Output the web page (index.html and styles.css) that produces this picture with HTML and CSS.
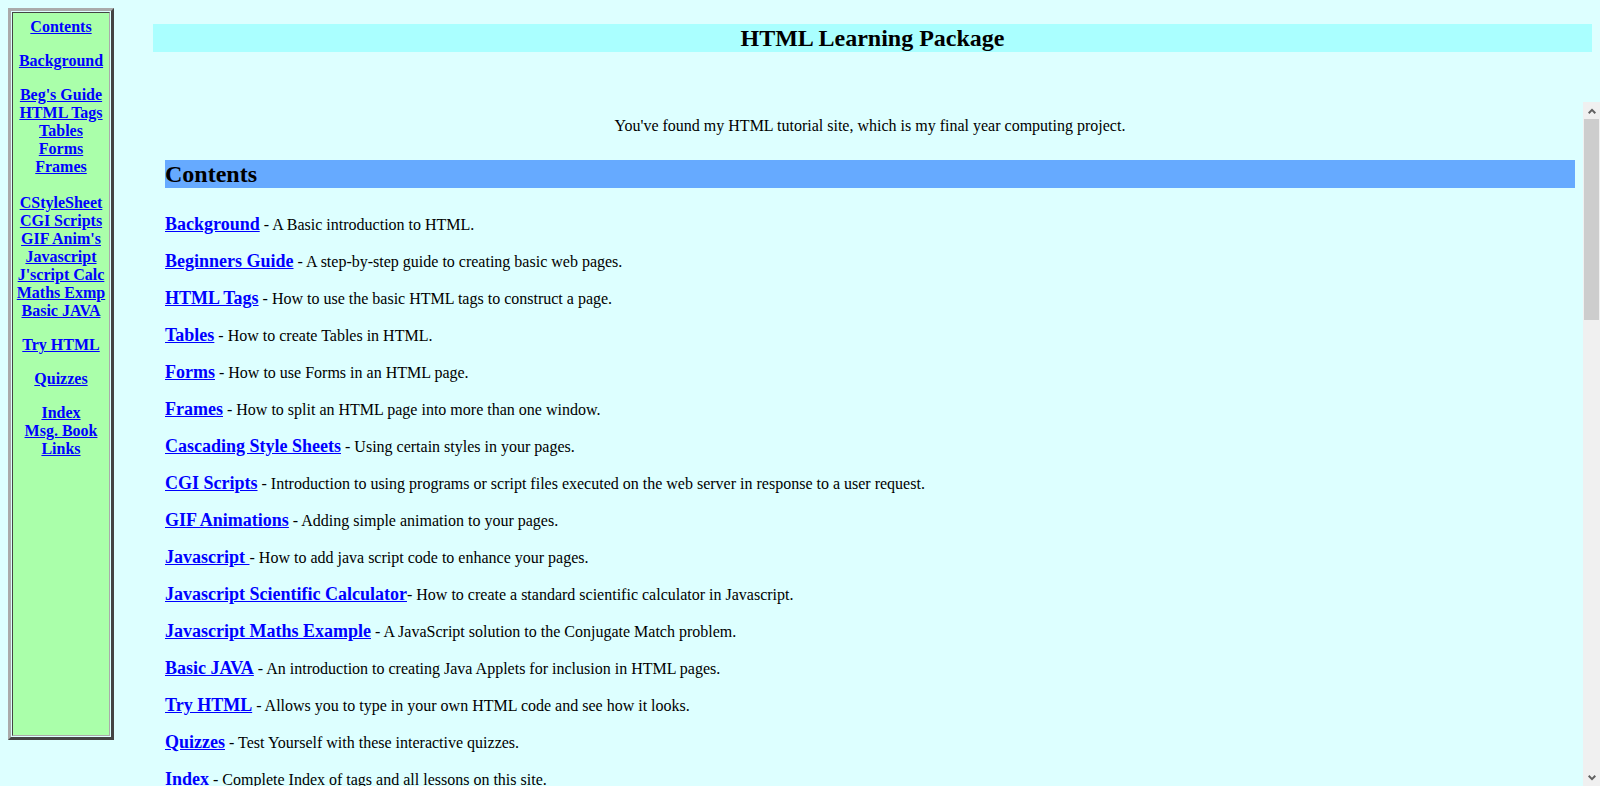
FILE: index.html
```html
<!DOCTYPE html>
<html>
<head>
<meta charset="utf-8">
<title>HTML Learning Package</title>
<link rel="stylesheet" href="styles.css">
</head>
<body>
<div class="frames">
  <div class="nav-frame">
    <div class="nav">
      <div class="nav-cell">
        <p class="nav-group"><a href="#">Contents</a></p>
        <p class="nav-group"><a href="#">Background</a></p>
        <p class="nav-group"><a href="#">Beg's Guide</a><br><a href="#">HTML Tags</a><br><a href="#">Tables</a><br><a href="#">Forms</a><br><a href="#">Frames</a></p>
        <p class="nav-group nav-group-wide"><a href="#">CStyleSheet</a><br><a href="#">CGI Scripts</a><br><a href="#">GIF Anim's</a><br><a href="#">Javascript</a><br><a href="#">J'script Calc</a><br><a href="#">Maths Exmp</a><br><a href="#">Basic JAVA</a></p>
        <p class="nav-group"><a href="#">Try HTML</a></p>
        <p class="nav-group"><a href="#">Quizzes</a></p>
        <p class="nav-group"><a href="#">Index</a><br><a href="#">Msg. Book</a><br><a href="#">Links</a></p>
      </div>
    </div>
  </div>
  <div class="right">
    <div class="top-frame">
      <h1 class="banner">HTML Learning Package</h1>
    </div>
    <div class="main">
      <div class="main-inner">
        <p class="intro">You've found my HTML tutorial site, which is my final year computing project.</p>
        <h2 class="section">Contents</h2>
        <p class="item"><a href="#">Background</a> - A Basic introduction to HTML.</p>
        <p class="item"><a href="#">Beginners Guide</a> - A step-by-step guide to creating basic web pages.</p>
        <p class="item"><a href="#">HTML Tags</a> - How to use the basic HTML tags to construct a page.</p>
        <p class="item"><a href="#">Tables</a> - How to create Tables in HTML.</p>
        <p class="item"><a href="#">Forms</a> - How to use Forms in an HTML page.</p>
        <p class="item"><a href="#">Frames</a> - How to split an HTML page into more than one window.</p>
        <p class="item"><a href="#">Cascading Style Sheets</a> - Using certain styles in your pages.</p>
        <p class="item"><a href="#">CGI Scripts</a> - Introduction to using programs or script files executed on the web server in response to a user request.</p>
        <p class="item"><a href="#">GIF Animations</a> - Adding simple animation to your pages.</p>
        <p class="item"><a href="#">Javascript&nbsp;</a>- How to add java script code to enhance your pages.</p>
        <p class="item"><a href="#">Javascript Scientific Calculator</a>- How to create a standard scientific calculator in Javascript.</p>
        <p class="item"><a href="#">Javascript Maths Example</a> - A JavaScript solution to the Conjugate Match problem.</p>
        <p class="item"><a href="#">Basic JAVA</a> - An introduction to creating Java Applets for inclusion in HTML pages.</p>
        <p class="item"><a href="#">Try HTML</a> - Allows you to type in your own HTML code and see how it looks.</p>
        <p class="item"><a href="#">Quizzes</a> - Test Yourself with these interactive quizzes.</p>
        <p class="item"><a href="#">Index</a> - Complete Index of tags and all lessons on this site.</p>
      </div>
      <div class="scrollbar" aria-hidden="true">
        <div class="sb-button">
          <svg width="8" height="6" viewBox="0 0 8 6"><path d="M0 4.5 L4 0.5 L8 4.5 L6.6 5.9 L4 3.3 L1.4 5.9 Z" fill="#606060"/></svg>
        </div>
        <div class="sb-thumb"></div>
        <div class="sb-track"></div>
        <div class="sb-button">
          <svg width="8" height="6" viewBox="0 0 8 6"><path d="M0 1.5 L4 5.5 L8 1.5 L6.6 0.1 L4 2.7 L1.4 0.1 Z" fill="#606060"/></svg>
        </div>
      </div>
    </div>
  </div>
</div>
</body>
</html>
```
FILE: styles.css
```css
html, body {
  margin: 0;
  height: 786px;
  overflow: hidden;
  background: #ddffff;
  font-family: "Liberation Serif", "Times New Roman", serif;
  font-size: 16px;
  color: #000;
}

a {
  color: #0000ff;
  font-weight: bold;
  text-decoration: underline;
}

.frames {
  display: flex;
  height: 786px;
}

/* left navigation frame */
.nav-frame {
  width: 145px;
  flex: none;
  padding: 8px;
  box-sizing: border-box;
}

.nav {
  width: 106px;
  height: 732px;
  box-sizing: border-box;
  border: 3px solid;
  border-color: #aaaaaa #444444 #444444 #aaaaaa;
  padding: 1px;
}

.nav-cell {
  height: 100%;
  box-sizing: border-box;
  border: 1px solid;
  border-color: #444444 #aaaaaa #aaaaaa #444444;
  background: #aaffaa;
  padding: 5px 2px 3px;
  text-align: center;
  line-height: 18px;
}

.nav-group {
  margin: 16px 0;
}

.nav-group:first-child {
  margin-top: 0;
}

.nav-group-wide {
  margin-top: 18px;
}

/* right side */
.right {
  flex: 1;
  display: flex;
  flex-direction: column;
  min-width: 0;
}

.top-frame {
  height: 102px;
  flex: none;
  box-sizing: border-box;
  padding: 24px 8px 0;
}

.banner {
  margin: 0;
  background: #aaffff;
  font-size: 24px;
  line-height: 28px;
  height: 28px;
  text-align: center;
  font-weight: bold;
}

.main {
  flex: 1;
  min-height: 0;
  margin-left: 12px;
  display: flex;
  overflow: hidden;
}

.main-inner {
  flex: 1;
  min-width: 0;
  padding: 15px 8px 0;
  box-sizing: border-box;
}

.intro {
  margin: 0;
  text-align: center;
  line-height: 18px;
}

.section {
  margin: 25px 0 26px;
  background: #66aaff;
  font-size: 24px;
  line-height: 28px;
  height: 28px;
  font-weight: bold;
}

.item {
  margin: 0 0 16px;
  line-height: 21px;
  white-space: nowrap;
}

.item a {
  font-size: 18px;
  line-height: 1;
}

/* classic scrollbar of the inner frame */
.scrollbar {
  width: 17px;
  flex: none;
  display: flex;
  flex-direction: column;
  background: #f0f0f0;
}

.sb-button {
  height: 17px;
  flex: none;
  display: flex;
  align-items: center;
  justify-content: center;
}

.sb-thumb {
  height: 201px;
  flex: none;
  margin: 0 1px;
  background: #cdcdcd;
}

.sb-track {
  flex: 1;
}
```
